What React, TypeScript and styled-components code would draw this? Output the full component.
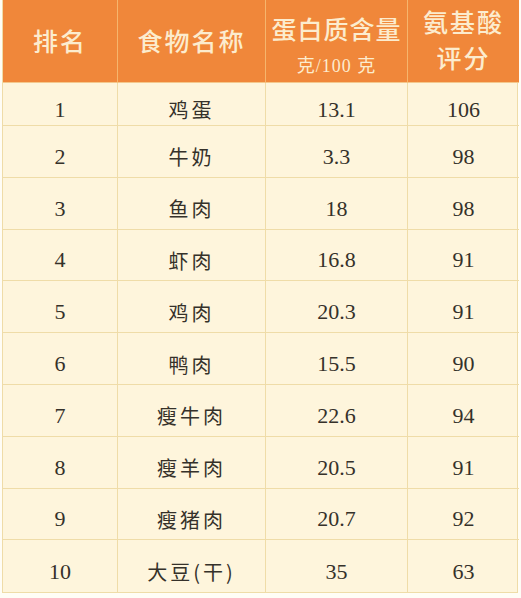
import React from "react";
import styled, { createGlobalStyle } from "styled-components";

const Global = createGlobalStyle`
  html, body { margin: 0; padding: 0; background: #fffdf6; }
  * { box-sizing: border-box; }
`;

const Page = styled.div`
  width: 521px;
  height: 598px;
  padding: 0 3px 0 2px;
  background: #fffdf6;
`;

const Table = styled.div`
  display: grid;
  grid-template-columns: 115px 148px 142px 111px;
  grid-template-rows: 83px 43px repeat(9, 51.8px);
  border-left: 1px solid #efdca8;
  border-right: 1px solid #efdca8;
  border-bottom: 1px solid #efdca8;
  background: #fef5dc;
`;

const HeadCell = styled.div<{ $last?: boolean; $top: number }>`
  background: #f0873a;
  color: #fcecce;
  display: flex;
  flex-direction: column;
  align-items: center;
  justify-content: flex-start;
  padding-top: ${(p) => p.$top}px;
  font-family: "Noto Sans CJK SC", "Noto Sans", sans-serif;
  font-weight: 500;
  font-size: 25px;
  letter-spacing: 2px;
  border-right: ${(p) => (p.$last ? "none" : "1px solid #f6b56c")};
  border-bottom: 1px solid #f4c88c;
`;

const HeadTitle = styled.span<{ $lh?: number; $tight?: boolean }>`
  line-height: ${(p) => p.$lh ?? 36}px;
  letter-spacing: ${(p) => (p.$tight ? "1px" : "2px")};
`;

const Unit = styled.span`
  font-family: "Liberation Serif", "Noto Sans CJK SC", serif;
  font-weight: 400;
  font-size: 18px;
  letter-spacing: 1px;
  line-height: 22px;
  margin-top: 10px;
  white-space: pre;
`;

const Cell = styled.div<{ $last?: boolean; $bottom?: boolean; $cjk?: boolean }>`
  display: flex;
  align-items: center;
  justify-content: center;
  padding-top: 11px;
  color: #35312a;
  font-family: ${(p) =>
    p.$cjk
      ? '"Noto Sans CJK SC", "Noto Sans", sans-serif'
      : '"Liberation Serif", "Noto Sans CJK SC", serif'};
  font-size: ${(p) => (p.$cjk ? "20px" : "22px")};
  letter-spacing: ${(p) => (p.$cjk ? "3px" : "0")};
  white-space: pre;
  border-right: ${(p) => (p.$last ? "none" : "1px solid #efdca8")};
  border-bottom: ${(p) => (p.$bottom ? "none" : "1px solid #efdca8")};
`;

const rows: [string, string, string, string][] = [
  ["1", "鸡蛋", "13.1", "106"],
  ["2", "牛奶", "3.3", "98"],
  ["3", "鱼肉", "18", "98"],
  ["4", "虾肉", "16.8", "91"],
  ["5", "鸡肉", "20.3", "91"],
  ["6", "鸭肉", "15.5", "90"],
  ["7", "瘦牛肉", "22.6", "94"],
  ["8", "瘦羊肉", "20.5", "91"],
  ["9", "瘦猪肉", "20.7", "92"],
  ["10", "大豆(干)", "35", "63"],
];

export default function App() {
  return (
    <>
      <Global />
      <Page>
        <Table>
          <HeadCell $top={22}>
            <HeadTitle>排名</HeadTitle>
          </HeadCell>
          <HeadCell $top={22}>
            <HeadTitle>食物名称</HeadTitle>
          </HeadCell>
          <HeadCell $top={11}>
            <HeadTitle $lh={34} $tight>
              蛋白质含量
            </HeadTitle>
            <Unit>克/100 克</Unit>
          </HeadCell>
          <HeadCell $last $top={3}>
            <HeadTitle>氨基酸</HeadTitle>
            <HeadTitle>评分</HeadTitle>
          </HeadCell>
          {rows.map((r, i) => {
            const bottom = i === rows.length - 1;
            return (
              <React.Fragment key={r[0]}>
                <Cell $bottom={bottom}>{r[0]}</Cell>
                <Cell $bottom={bottom} $cjk>
                  {r[1]}
                </Cell>
                <Cell $bottom={bottom}>{r[2]}</Cell>
                <Cell $bottom={bottom} $last>
                  {r[3]}
                </Cell>
              </React.Fragment>
            );
          })}
        </Table>
      </Page>
    </>
  );
}
